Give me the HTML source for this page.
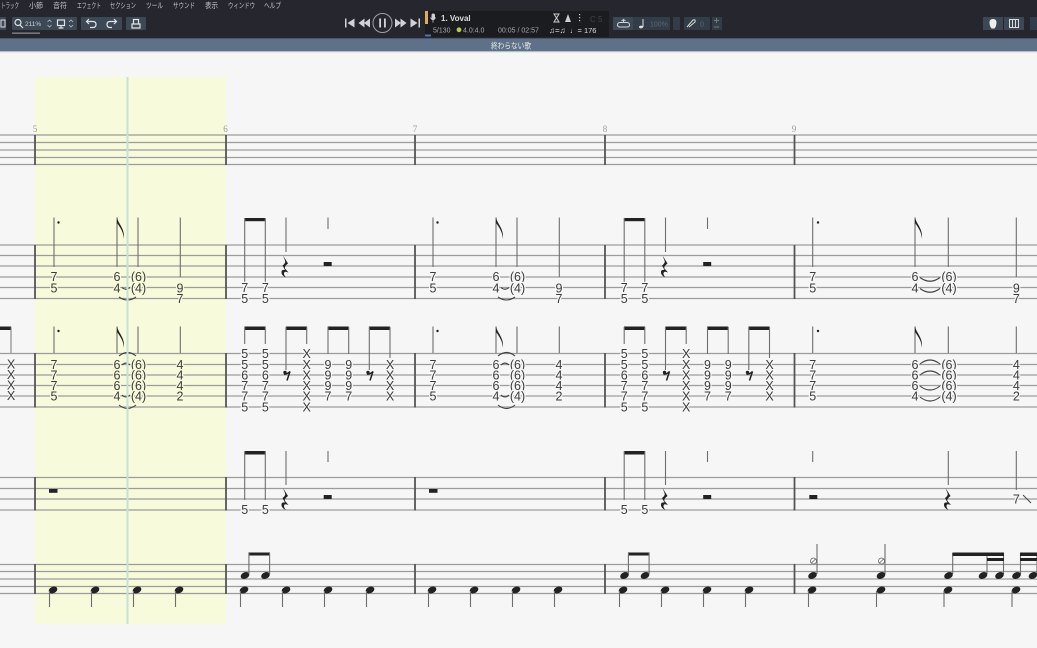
<!DOCTYPE html>
<html lang="ja"><head><meta charset="utf-8"><title>終わらない歌</title>
<style>
html,body{margin:0;padding:0;width:1037px;height:648px;overflow:hidden;background:#f6f6f6}
svg{display:block;font-family:"Liberation Sans","Noto Sans CJK JP",sans-serif;filter:blur(.35px)}
.l line{stroke:#9c9c9c;stroke-width:1.200}
.b line{stroke:#555;stroke-width:1.800}
.s line{stroke:#6e6e6e;stroke-width:1.100}
.n text{font-size:12.500px;fill:#3c3c3c;text-anchor:middle;paint-order:stroke;stroke:#f6f6f6;stroke-width:2.500px}
.n.y text{stroke:#f7fadb}
.a path{fill:none;stroke:#444;stroke-width:1.100}
.m text{font-size:7.500px;fill:#c4c4c4}
.d text{font-size:7px;fill:#aaa}
.h text{font:9px "Liberation Serif",serif;fill:#999;text-anchor:middle}
.w{fill:#3c4856}
.v{fill:#333d49}
</style></head><body>
<svg width="1037" height="648" viewBox="0 0 1037 648" xmlns="http://www.w3.org/2000/svg">
<defs>
<path id="fl" d="M0 0C1 7 8 11 7 22C6.500 15 3 10 0 6Z" fill="#222"/>
<path id="qr" d="M-2 0L3 8Q-1 11 0 13L3.500 17Q-1 15-1 18Q-1 20 1 22Q-4 20-3.500 16Q-3 14 0 14.500L-2.500 10Q1 7.500 0 5Z" fill="#222"/>
<g id="er"><circle cx="-2" cy="1" r="1.700" fill="#222"/><path d="M-3 2.500Q0 3 3 0L0 9" fill="none" stroke="#222" stroke-width="1.500"/></g>
<ellipse id="nh" rx="4.500" ry="3.200" transform="rotate(-24)" fill="#222"/>
<g id="m5">
<g class="s"><line x1="54" y1="217.500" x2="54" y2="267"/><line x1="117" y1="217.500" x2="117" y2="267"/><line x1="138" y1="217.500" x2="138" y2="267"/><line x1="180.300" y1="217.500" x2="180.300" y2="277"/>
<line x1="54" y1="326.500" x2="54" y2="353"/><line x1="117" y1="326.500" x2="117" y2="353"/><line x1="138" y1="326.500" x2="138" y2="353"/><line x1="180.300" y1="326.500" x2="180.300" y2="353"/></g>
<circle cx="58.500" cy="222.500" r="1.200" fill="#222"/><circle cx="58.500" cy="331" r="1.200" fill="#222"/>
<use href="#fl" x="117" y="217"/><use href="#fl" x="117" y="326"/>
<g class="a"><path d="M122 287.500Q126 291 130 287.500"/><path d="M119 297Q127.500 303 136 297"/>
<path d="M119 356Q127.500 349 136 356"/><path d="M122 365Q126 361 130 365"/><path d="M122 395Q126 399 130 395"/><path d="M119 405Q127.500 412 136 405"/></g>
</g>
<g id="m6">
<rect x="244.500" y="218" width="21" height="3.200" fill="#222"/>
<g class="s"><line x1="244.700" y1="218" x2="244.700" y2="283"/><line x1="265.300" y1="218" x2="265.300" y2="283"/><line x1="286" y1="217.500" x2="286" y2="252"/><line x1="328" y1="217.500" x2="328" y2="229"/></g>
<use href="#qr" x="285" y="255.500"/><rect x="323.700" y="262" width="8" height="4" fill="#222"/>
<path d="M244.500 326.500h21v3.500h-21zM286 326.500h21v3.500h-21zM327.700 326.500h21v3.500h-21zM369 326.500h21v3.500h-21z" fill="#222"/>
<g class="s"><line x1="244.700" y1="327" x2="244.700" y2="344"/><line x1="265.300" y1="327" x2="265.300" y2="344"/><line x1="286" y1="327" x2="286" y2="370"/><line x1="306.700" y1="327" x2="306.700" y2="344"/><line x1="328" y1="327" x2="328" y2="354"/><line x1="348.700" y1="327" x2="348.700" y2="354"/><line x1="369.300" y1="327" x2="369.300" y2="370"/><line x1="390" y1="327" x2="390" y2="358"/></g>
<use href="#er" x="287" y="371.500"/><use href="#er" x="370" y="371.500"/>
<rect x="244.500" y="451" width="21" height="3.500" fill="#222"/>
<g class="s"><line x1="244.700" y1="451" x2="244.700" y2="500"/><line x1="265.300" y1="451" x2="265.300" y2="500"/><line x1="286" y1="451" x2="286" y2="485"/><line x1="328" y1="451" x2="328" y2="462"/></g>
<use href="#qr" x="285" y="488"/><rect x="323.700" y="495" width="8" height="4" fill="#222"/>
<use href="#nh" x="245" y="575.500"/><use href="#nh" x="265.500" y="575.500"/>
<rect x="248.500" y="552.500" width="21.500" height="3" fill="#222"/>
<g class="s"><line x1="248.900" y1="553" x2="248.900" y2="574"/><line x1="269.600" y1="553" x2="269.600" y2="574"/></g>
</g>
<g id="q4">
<use href="#nh" x="0" y="590"/><use href="#nh" x="42" y="590"/><use href="#nh" x="84" y="590"/><use href="#nh" x="126" y="590"/>
<g class="s"><line x1="-3.500" y1="591" x2="-3.500" y2="607"/><line x1="38.500" y1="591" x2="38.500" y2="607"/><line x1="80.500" y1="591" x2="80.500" y2="607"/><line x1="122.500" y1="591" x2="122.500" y2="607"/></g>
</g>
</defs>

<rect width="1037" height="648" fill="#f6f6f6"/>
<rect x="35" y="77" width="191" height="547" fill="#f7fadb"/>

<g class="l">
<line x1="0" y1="135" x2="1037" y2="135"/><line x1="0" y1="142.500" x2="1037" y2="142.500"/><line x1="0" y1="150" x2="1037" y2="150"/><line x1="0" y1="157.500" x2="1037" y2="157.500"/><line x1="0" y1="164.500" x2="1037" y2="164.500"/>
<line x1="0" y1="245" x2="1037" y2="245"/><line x1="0" y1="255.500" x2="1037" y2="255.500"/><line x1="0" y1="266" x2="1037" y2="266"/><line x1="0" y1="277" x2="1037" y2="277"/><line x1="0" y1="287.500" x2="1037" y2="287.500"/><line x1="0" y1="298.500" x2="1037" y2="298.500"/>
<line x1="0" y1="353.500" x2="1037" y2="353.500"/><line x1="0" y1="364.500" x2="1037" y2="364.500"/><line x1="0" y1="375" x2="1037" y2="375"/><line x1="0" y1="385.500" x2="1037" y2="385.500"/><line x1="0" y1="396" x2="1037" y2="396"/><line x1="0" y1="407" x2="1037" y2="407"/>
<line x1="0" y1="477.500" x2="1037" y2="477.500"/><line x1="0" y1="488.500" x2="1037" y2="488.500"/><line x1="0" y1="499" x2="1037" y2="499"/><line x1="0" y1="510" x2="1037" y2="510"/>
<line x1="0" y1="564.500" x2="1037" y2="564.500"/><line x1="0" y1="571.500" x2="1037" y2="571.500"/><line x1="0" y1="579" x2="1037" y2="579"/><line x1="0" y1="586.500" x2="1037" y2="586.500"/><line x1="0" y1="593.500" x2="1037" y2="593.500"/>
</g>
<g class="b">
<line x1="35" y1="135" x2="35" y2="165"/><line x1="35" y1="245" x2="35" y2="299"/><line x1="35" y1="353" x2="35" y2="407.500"/><line x1="35" y1="477" x2="35" y2="510.500"/><line x1="35" y1="564" x2="35" y2="594"/>
<line x1="226" y1="135" x2="226" y2="165"/><line x1="226" y1="245" x2="226" y2="299"/><line x1="226" y1="353" x2="226" y2="407.500"/><line x1="226" y1="477" x2="226" y2="510.500"/><line x1="226" y1="564" x2="226" y2="594"/>
<line x1="415" y1="135" x2="415" y2="165"/><line x1="415" y1="245" x2="415" y2="299"/><line x1="415" y1="353" x2="415" y2="407.500"/><line x1="415" y1="477" x2="415" y2="510.500"/><line x1="415" y1="564" x2="415" y2="594"/>
<line x1="605" y1="135" x2="605" y2="165"/><line x1="605" y1="245" x2="605" y2="299"/><line x1="605" y1="353" x2="605" y2="407.500"/><line x1="605" y1="477" x2="605" y2="510.500"/><line x1="605" y1="564" x2="605" y2="594"/>
<line x1="794.500" y1="135" x2="794.500" y2="165"/><line x1="794.500" y1="245" x2="794.500" y2="299"/><line x1="794.500" y1="353" x2="794.500" y2="407.500"/><line x1="794.500" y1="477" x2="794.500" y2="510.500"/><line x1="794.500" y1="564" x2="794.500" y2="594"/>
</g>
<g class="h"><text x="35" y="132">5</text><text x="225.500" y="132">6</text><text x="415" y="132">7</text><text x="605" y="132">8</text><text x="794" y="132">9</text></g>

<!-- left edge -->
<rect x="0" y="326.500" width="11" height="3.500" fill="#222"/>
<line x1="11" y1="327" x2="11" y2="353" stroke="#777"/>
<g class="n"><text x="11" y="368.500">X</text><text x="11" y="379">X</text><text x="11" y="389.500">X</text><text x="11" y="400">X</text></g>

<!-- measures 5 and 7 -->
<use href="#m5"/>
<g class="n y">
<text x="54" y="281">7</text><text x="54" y="292.500">5</text><text x="117" y="281">6</text><text x="117" y="292.500">4</text><text x="138.500" y="281">(6)</text><text x="138.500" y="292.500">(4)</text><text x="180" y="292.500">9</text><text x="180" y="303">7</text>
<text x="54" y="369">7</text><text x="54" y="379.500">7</text><text x="54" y="390">7</text><text x="54" y="400.500">5</text>
<text x="117" y="369">6</text><text x="117" y="379.500">6</text><text x="117" y="390">6</text><text x="117" y="400.500">4</text>
<text x="138.500" y="369">(6)</text><text x="138.500" y="379.500">(6)</text><text x="138.500" y="390">(6)</text><text x="138.500" y="400.500">(4)</text>
<text x="180" y="369">4</text><text x="180" y="379.500">4</text><text x="180" y="390">4</text><text x="180" y="400.500">2</text>
</g>
<rect x="49" y="489" width="8.500" height="3.800" fill="#222"/>
<use href="#m5" x="379"/>
<g class="n" transform="translate(379,0)">
<text x="54" y="281">7</text><text x="54" y="292.500">5</text><text x="117" y="281">6</text><text x="117" y="292.500">4</text><text x="138.500" y="281">(6)</text><text x="138.500" y="292.500">(4)</text><text x="180" y="292.500">9</text><text x="180" y="303">7</text>
<text x="54" y="369">7</text><text x="54" y="379.500">7</text><text x="54" y="390">7</text><text x="54" y="400.500">5</text>
<text x="117" y="369">6</text><text x="117" y="379.500">6</text><text x="117" y="390">6</text><text x="117" y="400.500">4</text>
<text x="138.500" y="369">(6)</text><text x="138.500" y="379.500">(6)</text><text x="138.500" y="390">(6)</text><text x="138.500" y="400.500">(4)</text>
<text x="180" y="369">4</text><text x="180" y="379.500">4</text><text x="180" y="390">4</text><text x="180" y="400.500">2</text>
</g>
<rect x="429" y="489" width="8.500" height="3.800" fill="#222"/>

<!-- measures 6 and 8 -->
<use href="#m6"/>
<g class="n">
<text x="244.700" y="292">7</text><text x="244.700" y="303">5</text><text x="265.300" y="292">7</text><text x="265.300" y="303">5</text>
<text x="244.700" y="358">5</text><text x="244.700" y="369">5</text><text x="244.700" y="379.500">6</text><text x="244.700" y="390">7</text><text x="244.700" y="400.500">7</text><text x="244.700" y="411.500">5</text>
<text x="265.300" y="358">5</text><text x="265.300" y="369">5</text><text x="265.300" y="379.500">6</text><text x="265.300" y="390">7</text><text x="265.300" y="400.500">7</text><text x="265.300" y="411.500">5</text>
<text x="306.700" y="358">X</text><text x="306.700" y="369">X</text><text x="306.700" y="379.500">X</text><text x="306.700" y="390">X</text><text x="306.700" y="400.500">X</text><text x="306.700" y="411.500">X</text>
<text x="328" y="369">9</text><text x="328" y="379.500">9</text><text x="328" y="390">9</text><text x="328" y="400.500">7</text>
<text x="348.700" y="369">9</text><text x="348.700" y="379.500">9</text><text x="348.700" y="390">9</text><text x="348.700" y="400.500">7</text>
<text x="390" y="369">X</text><text x="390" y="379.500">X</text><text x="390" y="390">X</text><text x="390" y="400.500">X</text>
<text x="244.700" y="514">5</text><text x="265.300" y="514">5</text>
</g>
<use href="#m6" x="379.500"/>
<g class="n" transform="translate(379.500,0)">
<text x="244.700" y="292">7</text><text x="244.700" y="303">5</text><text x="265.300" y="292">7</text><text x="265.300" y="303">5</text>
<text x="244.700" y="358">5</text><text x="244.700" y="369">5</text><text x="244.700" y="379.500">6</text><text x="244.700" y="390">7</text><text x="244.700" y="400.500">7</text><text x="244.700" y="411.500">5</text>
<text x="265.300" y="358">5</text><text x="265.300" y="369">5</text><text x="265.300" y="379.500">6</text><text x="265.300" y="390">7</text><text x="265.300" y="400.500">7</text><text x="265.300" y="411.500">5</text>
<text x="306.700" y="358">X</text><text x="306.700" y="369">X</text><text x="306.700" y="379.500">X</text><text x="306.700" y="390">X</text><text x="306.700" y="400.500">X</text><text x="306.700" y="411.500">X</text>
<text x="328" y="369">9</text><text x="328" y="379.500">9</text><text x="328" y="390">9</text><text x="328" y="400.500">7</text>
<text x="348.700" y="369">9</text><text x="348.700" y="379.500">9</text><text x="348.700" y="390">9</text><text x="348.700" y="400.500">7</text>
<text x="390" y="369">X</text><text x="390" y="379.500">X</text><text x="390" y="390">X</text><text x="390" y="400.500">X</text>
<text x="244.700" y="514">5</text><text x="265.300" y="514">5</text>
</g>

<!-- measure 9 -->
<g class="s">
<line x1="812.700" y1="217.500" x2="812.700" y2="267"/><line x1="915" y1="217.500" x2="915" y2="267"/><line x1="948.300" y1="217.500" x2="948.300" y2="267"/><line x1="1016.300" y1="217.500" x2="1016.300" y2="277"/>
<line x1="812.700" y1="326.500" x2="812.700" y2="353"/><line x1="915" y1="326.500" x2="915" y2="353"/><line x1="948.300" y1="326.500" x2="948.300" y2="353"/><line x1="1016.300" y1="326.500" x2="1016.300" y2="353"/>
<line x1="812.700" y1="451" x2="812.700" y2="462"/><line x1="948.300" y1="451" x2="948.300" y2="485"/><line x1="1016.300" y1="451" x2="1016.300" y2="490"/>
</g>
<circle cx="818" cy="222.500" r="1.200" fill="#222"/><circle cx="818" cy="331" r="1.200" fill="#222"/>
<use href="#fl" x="915" y="217"/><use href="#fl" x="915" y="326"/>
<g class="a"><path d="M920 277.500Q930 285 940 277.500"/><path d="M920 288.500Q930 296 940 288.500"/>
<path d="M920 364Q930 356 940 364"/><path d="M920 375Q930 367 940 375"/><path d="M920 386Q930 394 940 386"/><path d="M920 397Q930 405 940 397"/></g>
<g class="n">
<text x="812.700" y="281">7</text><text x="812.700" y="292.500">5</text><text x="915" y="281">6</text><text x="915" y="292.500">4</text><text x="949" y="281">(6)</text><text x="949" y="292.500">(4)</text><text x="1016.300" y="292.500">9</text><text x="1016.300" y="303">7</text>
<text x="812.700" y="369">7</text><text x="812.700" y="379.500">7</text><text x="812.700" y="390">7</text><text x="812.700" y="400.500">5</text>
<text x="915" y="369">6</text><text x="915" y="379.500">6</text><text x="915" y="390">6</text><text x="915" y="400.500">4</text>
<text x="949" y="369">(6)</text><text x="949" y="379.500">(6)</text><text x="949" y="390">(6)</text><text x="949" y="400.500">(4)</text>
<text x="1016.300" y="369">4</text><text x="1016.300" y="379.500">4</text><text x="1016.300" y="390">4</text><text x="1016.300" y="400.500">2</text>
<text x="1016.300" y="503.500">7</text>
</g>
<line x1="1023" y1="495" x2="1031" y2="503" stroke="#444"/>
<rect x="809.300" y="495" width="8" height="4" fill="#222"/>
<use href="#qr" x="947.500" y="488"/>

<!-- drums -->
<use href="#q4" x="53"/><use href="#q4" x="244"/><use href="#q4" x="432"/><use href="#q4" x="623"/>
<use href="#nh" x="812" y="590"/><use href="#nh" x="881" y="590"/><use href="#nh" x="948" y="590"/><use href="#nh" x="1016" y="590"/>
<g class="s"><line x1="808.500" y1="591" x2="808.500" y2="607"/><line x1="876.500" y1="591" x2="876.500" y2="607"/><line x1="944" y1="591" x2="944" y2="607"/><line x1="1012" y1="591" x2="1012" y2="607"/>
<line x1="817" y1="544" x2="817" y2="574"/><line x1="885" y1="544" x2="885" y2="574"/><line x1="952.700" y1="553" x2="952.700" y2="574"/><line x1="987" y1="553" x2="987" y2="574"/><line x1="1003.500" y1="553" x2="1003.500" y2="574"/><line x1="1020.500" y1="553" x2="1020.500" y2="574"/><line x1="1037" y1="553" x2="1037" y2="574"/></g>
<use href="#nh" x="812.500" y="575.500"/><use href="#nh" x="881" y="575.500"/><use href="#nh" x="948.500" y="575.500"/><use href="#nh" x="983" y="575.500"/><use href="#nh" x="999.500" y="575.500"/><use href="#nh" x="1016.500" y="575.500"/><use href="#nh" x="1033" y="575.500"/>
<path d="M952.500 552.500h51.500v3.500h-51.500zM987 558h17v3h-17zM1020 552.500h17v3.500h-17zM1020 558h17v3h-17z" fill="#222"/>
<g fill="none" stroke="#666" stroke-width=".8"><circle cx="813.500" cy="561" r="3"/><circle cx="881.500" cy="561" r="3"/><line x1="811.500" y1="563" x2="815.500" y2="559"/><line x1="879.500" y1="563" x2="883.500" y2="559"/></g>

<!-- cursor -->
<rect x="126.500" y="77" width="2" height="547" fill="#c6e0da"/>

<!-- toolbar -->
<rect width="1037" height="38" fill="#26262e"/>
<rect y="38" width="1037" height="14" fill="#5f7189"/>
<rect y="38" width="1037" height="1" fill="#49566b"/>
<rect y="51" width="1037" height="1.200" fill="#b5bfca"/>
<text x="491" y="48.500" font-size="8" fill="#e8e8e8" textLength="40" lengthAdjust="spacingAndGlyphs">終わらない歌</text>

<g class="m">
<text x="1" y="8" textLength="18" lengthAdjust="spacingAndGlyphs">トラック</text>
<text x="29" y="8" textLength="14" lengthAdjust="spacingAndGlyphs">小節</text>
<text x="53" y="8" textLength="14" lengthAdjust="spacingAndGlyphs">音符</text>
<text x="77" y="8" textLength="24" lengthAdjust="spacingAndGlyphs">エフェクト</text>
<text x="110" y="8" textLength="26" lengthAdjust="spacingAndGlyphs">セクション</text>
<text x="146" y="8" textLength="17" lengthAdjust="spacingAndGlyphs">ツール</text>
<text x="173" y="8" textLength="22" lengthAdjust="spacingAndGlyphs">サウンド</text>
<text x="205" y="8" textLength="13" lengthAdjust="spacingAndGlyphs">表示</text>
<text x="228" y="8" textLength="27" lengthAdjust="spacingAndGlyphs">ウィンドウ</text>
<text x="264" y="8" textLength="17" lengthAdjust="spacingAndGlyphs">ヘルプ</text>
</g>

<rect class="w" x="-2" y="17" width="8" height="13" rx="1"/>
<rect x="1" y="20" width="4" height="7" fill="none" stroke="#ddd"/>
<rect class="w" x="12" y="17" width="65" height="13" rx="1"/>
<rect class="w" x="81" y="17" width="41" height="13" rx="1"/>
<rect class="w" x="126" y="17" width="20" height="13" rx="1"/>
<rect x="12" y="32.500" width="28" height="1.300" fill="#888"/>
<g fill="none" stroke="#e4e4e4" stroke-width="1.200"><circle cx="18" cy="22.500" r="3"/><line x1="20" y1="25" x2="23" y2="28"/>
<rect x="57.500" y="20" width="7" height="5.500"/><line x1="61" y1="25.500" x2="61" y2="28"/><line x1="58.500" y1="28" x2="63.500" y2="28"/>
<path d="M87 21.500H93Q96 21.500 96 24.500Q96 27.500 93 27.500H90"/><path d="M89 19L86.500 21.500L89 24"/>
<path d="M116 21.500H110Q107 21.500 107 24.500Q107 27.500 110 27.500H112"/><path d="M114 19L116.500 21.500L114 24"/></g>
<path d="M132 24h8v4h-8zM133.500 19.500h5V24h-5z" fill="none" stroke="#e4e4e4" stroke-width="1.200"/>
<text x="25" y="26" font-size="6.500" fill="#cfcfcf">211%</text>
<g fill="none" stroke="#bbb" stroke-width=".8"><path d="M47.500 22L49.500 20L51.500 22M47.500 25L49.500 27L51.500 25M69 22L71 20L73 22M69 25L71 27L73 25"/></g>

<!-- transport -->
<g fill="#cfd2d6">
<rect x="345" y="18.500" width="1.500" height="9"/><path d="M354.500 18.500V27.500L347.500 23Z"/>
<path d="M364.500 18.500V27.500L358.500 23ZM370 18.500V27.500L364 23Z"/>
<rect x="379.200" y="18.500" width="1.800" height="9"/><rect x="384" y="18.500" width="1.800" height="9"/>
<path d="M395 18.500V27.500L401 23ZM400.500 18.500V27.500L406.500 23Z"/>
<path d="M410.500 18.500V27.500L417.500 23Z"/><rect x="418.500" y="18.500" width="1.500" height="9"/>
</g>
<circle cx="382.500" cy="23" r="9.500" fill="none" stroke="#9da1a6" stroke-width="1"/>

<!-- display -->
<rect x="425" y="11" width="184" height="26" fill="#1b1c20"/>
<rect x="425" y="11" width="3" height="13" fill="#d8ad66"/>
<rect x="425" y="34.500" width="6" height="2" fill="#4a77b8"/>
<rect x="431.500" y="13.500" width="3.500" height="6" rx="1.700" fill="#cfcfcf"/><path d="M430.500 17.500Q433 22 435.500 17.500M433 20V22.500" fill="none" stroke="#cfcfcf" stroke-width=".8"/>
<text x="441" y="21" font-size="8" font-weight="bold" fill="#dcdcdc">1. Voval</text>
<g class="d">
<text x="433" y="32.500">5/130</text>
<text x="463" y="32.500">4.0:4.0</text>
<text x="498" y="32.500">00:05 / 02:57</text>
</g>
<text x="549" y="33" font-size="8" fill="#ddd">♫=♫</text>
<text x="570" y="33" font-size="7.500" fill="#ddd">♩= 176</text>
<circle cx="459" cy="29.800" r="2.400" fill="#b5c95b"/>
<path d="M554 14h5l-5 8h5zM554 22h5" fill="none" stroke="#ccc"/>
<path d="M565 22L568 14L571 22Z" fill="#ccc"/>
<rect x="579" y="14" width="1.200" height="1.200" fill="#ccc"/><rect x="579" y="17" width="1.200" height="1.200" fill="#ccc"/><rect x="579" y="20" width="1.200" height="1.200" fill="#ccc"/>
<text x="590" y="22" font-size="8" fill="#444">C 5</text>

<!-- right controls -->
<rect class="w" x="613" y="17" width="20" height="13"/>
<rect class="v" x="633" y="17" width="37" height="13"/>
<rect class="v" x="673" y="17" width="7" height="13"/>
<rect class="v" x="684" y="17" width="26" height="13"/>
<rect class="v" x="712" y="17" width="10" height="13"/>
<path d="M620 22.500H627Q629.500 22.500 629.500 25Q629.500 27 627 27H620Q617.500 27 617.500 25Q617.500 22.500 620 22.500M623.500 19.500V22.500M621.500 21L623.500 19.500L625.500 21" fill="none" stroke="#d4d4d4"/>
<line x1="643" y1="19" x2="643" y2="27" stroke="#ddd"/><ellipse cx="641" cy="27" rx="2" ry="1.400" fill="#ddd"/>
<text x="650" y="26.500" font-size="7" fill="#5e6670">100%</text>
<path d="M687 27L693 20Q696 19 695 22L689 27" fill="none" stroke="#ddd"/>
<text x="700" y="26.500" font-size="7" fill="#5e6670">0</text>
<path d="M714 20.500h5M716.500 18v5M714 27h5" stroke="#777" fill="none"/>
<rect class="w" x="983" y="17" width="20" height="13"/>
<rect class="w" x="1004" y="17" width="20" height="13"/>
<rect class="v" x="1030" y="17" width="7" height="13"/>
<path d="M993 19Q996.500 19 996.500 22.500Q996.500 26 994.500 28.500H991.500Q989.500 26 989.500 22.500Q989.500 19 993 19Z" fill="#eee"/>
<path d="M1009.500 19.500h9v8h-9zM1012.500 19.500v8M1015.500 19.500v8" fill="none" stroke="#ddd"/>
</svg>
</body></html>
